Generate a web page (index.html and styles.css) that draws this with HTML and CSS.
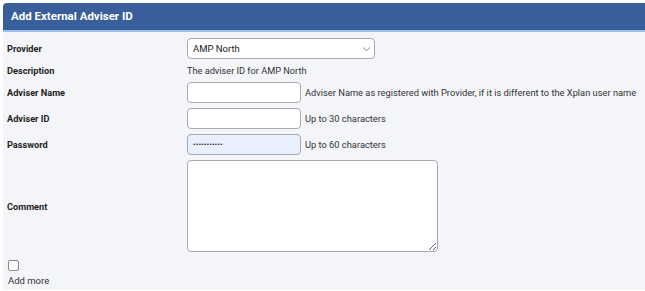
FILE: index.html
```html
<!DOCTYPE html>
<html>
<head>
<meta charset="utf-8">
<link rel="stylesheet" href="styles.css">
</head>
<body>
<div class="panel">
  <div class="panel-header">Add External Adviser ID</div>
  <div class="panel-body">
    <div class="form">
      <label class="lbl">Provider</label>
      <div class="field">
        <div class="select-wrap">
          <select class="select"><option>AMP North</option></select>
          <svg class="chev" width="9" height="6" viewBox="0 0 9 6"><path d="M1 1.5l3.5 3L8 1.5" fill="none" stroke="#888" stroke-width="1"/></svg>
        </div>
      </div>

      <label class="lbl">Description</label>
      <div class="field desc">The adviser ID for AMP North</div>

      <label class="lbl">Adviser Name</label>
      <div class="field"><input class="inp" type="text"><span class="hint">Adviser Name as registered with Provider, if it is different to the Xplan user name</span></div>

      <label class="lbl">Adviser ID</label>
      <div class="field"><input class="inp" type="text"><span class="hint">Up to 30 characters</span></div>

      <label class="lbl">Password</label>
      <div class="field"><input class="inp filled" type="password" value="abcdefghijk"><span class="hint">Up to 60 characters</span></div>

      <label class="lbl">Comment</label>
      <div class="field"><textarea class="ta"></textarea></div>
    </div>
    <div class="more">
      <input type="checkbox" class="cb">
      <div class="more-lbl">Add more</div>
    </div>
  </div>
</div>
</body>
</html>
```

FILE: styles.css
```css
html, body {
  margin: 0;
  padding: 0;
  background: #ffffff;
}
body {
  font-family: Roboto, "Liberation Sans", Arial, sans-serif;
  color: #222;
}
.panel {
  margin: 3px 0 0 3px;
  width: 660px;
  height: 287px;
  background: #f4f5f9;
  border-radius: 4px 0 0 4px;
  overflow: hidden;
}
.panel-header {
  height: 27px;
  background: #385f9a;
  border-bottom: 2px solid #9ebfe6;
  color: #fff;
  font-weight: 700;
  font-size: 11.5px;
  line-height: 27px;
  padding-left: 8px;
}
.panel-body {
  padding: 6px 0 0 4px;
}
.form {
  display: grid;
  grid-template-columns: 180px auto;
  row-gap: 5px;
  align-items: center;
}
.lbl {
  font-size: 9.2px;
  font-weight: 700;
  color: #1e1e1e;
}
.field {
  display: flex;
  align-items: center;
  font-size: 9.3px;
}
.desc {
  height: 13px;
  font-size: 9.2px;
  color: #333;
}
.select-wrap {
  position: relative;
  width: 188px;
  height: 21px;
}
.select {
  appearance: none;
  -webkit-appearance: none;
  width: 188px;
  height: 21px;
  box-sizing: border-box;
  border: 1px solid #a9a9b0;
  border-radius: 4px;
  background: #fff;
  font-family: inherit;
  font-size: 9.5px;
  color: #222;
  padding: 0 0 0 5px;
  margin: 0;
}
.chev {
  position: absolute;
  right: 4px;
  top: 8px;
}
.inp {
  box-sizing: border-box;
  width: 114px;
  height: 21px;
  border: 1px solid #a9a9b0;
  border-radius: 4px;
  background: #fff;
  margin: 0;
  padding: 0 5px;
  font-family: inherit;
  font-size: 8px;
  color: #222;
}
.inp.filled {
  background: #e8f0fe;
}
.hint {
  margin-left: 4px;
  color: #333;
  white-space: nowrap;
}
.ta {
  box-sizing: border-box;
  width: 251px;
  height: 92px;
  border: 1px solid #a9a9b0;
  border-radius: 4px;
  background: #fff;
  margin: 0;
  font-family: inherit;
}
.more {
  padding: 8px 0 0 1px;
}
.cb {
  appearance: none;
  -webkit-appearance: none;
  display: block;
  width: 11px;
  height: 11px;
  box-sizing: border-box;
  border: 1px solid #888;
  border-radius: 2px;
  background: #fff;
  margin: 0;
}
.more-lbl {
  margin-top: 4px;
  font-size: 9.5px;
  color: #333;
}
```
